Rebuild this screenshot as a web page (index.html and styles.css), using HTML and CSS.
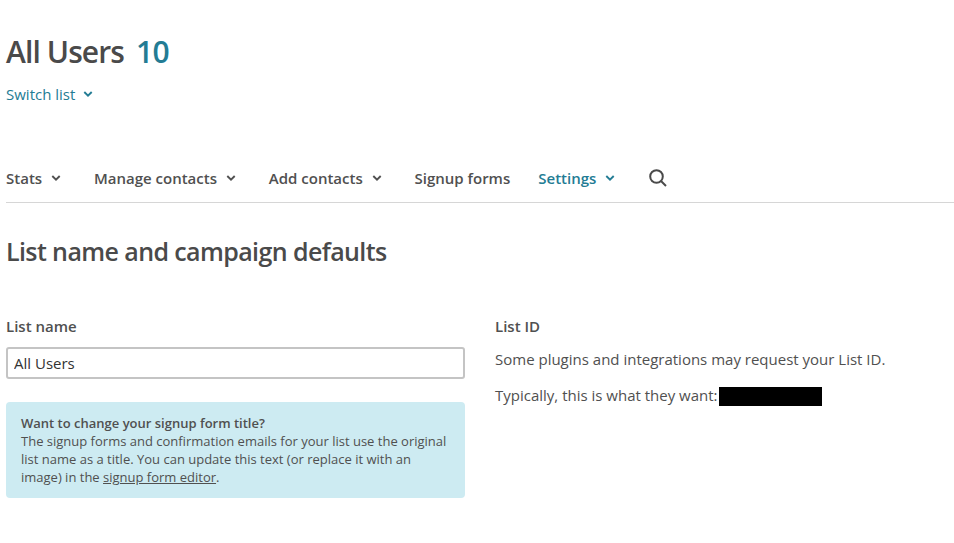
FILE: index.html
```html
<!DOCTYPE html>
<html lang="en">
<head>
<meta charset="utf-8">
<title>All Users</title>
<link rel="stylesheet" href="styles.css">
</head>
<body>
<main class="page">
  <header class="head">
    <h1 class="title">All Users <span class="count">10</span></h1>
    <a class="switch">Switch list <svg class="chev" viewBox="0 0 10 6"><path d="M1.3 1 5 4.6 8.7 1"/></svg></a>
  </header>
  <nav class="nav">
    <a class="item stats">Stats <svg class="chev" viewBox="0 0 10 6"><path d="M1.3 1 5 4.6 8.7 1"/></svg></a>
    <a class="item manage">Manage contacts <svg class="chev" viewBox="0 0 10 6"><path d="M1.3 1 5 4.6 8.7 1"/></svg></a>
    <a class="item add">Add contacts <svg class="chev" viewBox="0 0 10 6"><path d="M1.3 1 5 4.6 8.7 1"/></svg></a>
    <a class="item forms">Signup forms</a>
    <a class="item active">Settings <svg class="chev" viewBox="0 0 10 6"><path d="M1.3 1 5 4.6 8.7 1"/></svg></a>
    <a class="search"><svg viewBox="0 0 18 18"><circle cx="7.5" cy="7.5" r="6.3"/><path d="M12 12 17 17"/></svg></a>
  </nav>
  <h2 class="section">List name and campaign defaults</h2>
  <div class="columns">
    <section class="left">
      <label class="label" for="name">List name</label>
      <input class="field" id="name" type="text" value="All Users">
      <aside class="tip">
        <strong>Want to change your signup form title?</strong><br>
        The signup forms and confirmation emails for your list use the original<br>
        list name as a title. You can update this text (or replace it with an<br>
        image) in the <a class="link">signup form editor</a>.
      </aside>
    </section>
    <section class="right">
      <h3 class="label">List ID</h3>
      <p class="text">Some plugins and integrations may request your List ID.</p>
      <p class="text">Typically, this is what they want:<span class="redacted"></span></p>
    </section>
  </div>
</main>
</body>
</html>
```
FILE: styles.css
```css
* { box-sizing: border-box; }
body { margin: 0; background: #fff; color: #505050; font: 15px/24px "Open Sans", sans-serif; overflow: hidden; }
h1, h2, h3, p { margin: 0; }
.page { padding-left: 6px; }
.head { height: 154px; padding-top: 32px; }
.title { color: #4a4a4a; font-size: 30px; line-height: 40px; font-weight: 600; letter-spacing: -0.9px; }
.count { color: #237c94; margin-left: 5px; letter-spacing: -0.6px; }
.switch { display: flex; align-items: center; margin-top: 10px; color: #237c94; }
.chev { width: 10px; height: 6px; margin-left: 8px; fill: none; stroke: currentColor; stroke-width: 1.9; flex: none; }
.nav { display: flex; align-items: center; height: 49px; border-bottom: 1px solid #d6d6d6; font-weight: 600; }
.nav .chev { margin-left: 9px; }
.item { display: flex; align-items: center; margin-right: 32.8px; white-space: nowrap; }
.forms { margin-right: 28px; }
.active { color: #237c94; }
.search { display: flex; margin-left: 0.6px; }
.search svg { width: 18px; height: 18px; fill: none; stroke: #4a4a4a; stroke-width: 2; }
.section { margin-top: 30px; color: #4a4a4a; font-size: 25px; line-height: 36px; font-weight: 600; letter-spacing: -0.6px; }
.columns { display: flex; gap: 30px; margin-top: 45px; }
.left { width: 459px; }
.label { display: block; font-size: 15px; line-height: 24px; font-weight: 600; }
.field { display: block; width: 100%; height: 32px; margin-top: 9px; padding: 0 6px; border: 2px solid #c4c4c4; border-radius: 3px; background: #fff; color: #333; font: 15px "Open Sans", sans-serif; }
.tip { height: 96px; margin-top: 23px; padding: 12px 15px; border-radius: 4px; background: #cdebf2; font-size: 13px; line-height: 18px; white-space: nowrap; }
.tip strong { font-weight: 600; }
.link { text-decoration: underline; }
.text { display: flex; align-items: center; margin-top: 9px; white-space: nowrap; }
.text + .text { margin-top: 12px; }
.redacted { width: 103px; height: 19px; margin: 2px 0 0 1px; background: #000; }
```
